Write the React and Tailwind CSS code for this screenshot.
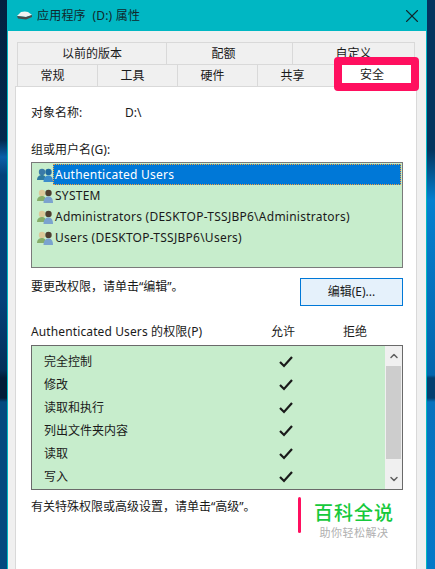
import { X, ChevronUp, ChevronDown } from 'lucide-react'

const font = { fontFamily: '"Noto Sans", "Noto Sans CJK SC", sans-serif' }

const topTabs = [
  { label: '以前的版本', cls: 'w-[149px]' },
  { label: '配额', cls: 'w-[126px] pr-[12px]' },
  { label: '自定义', cls: 'w-[123px] border-r' },
]
const bottomTabs = ['常规', '工具', '硬件', '共享']
const users = [
  { name: 'Authenticated Users', selected: true },
  { name: 'SYSTEM' },
  { name: 'Administrators (DESKTOP-TSSJBP6\\Administrators)' },
  { name: 'Users (DESKTOP-TSSJBP6\\Users)' },
]
const perms = ['完全控制', '修改', '读取和执行', '列出文件夹内容', '读取', '写入']

function DriveIcon() {
  return (
    <svg width="15" height="9" viewBox="0 0 15 9">
      <path d="M0 5 L4 1 Q8 0 11 1 L15 4 L9 6 Z" fill="#f2f2f2" />
      <path d="M0 5 L9 6 L15 4 V6 L9 8.5 L1 7.5 Z" fill="#4a4a4a" />
    </svg>
  )
}

function UsersIcon({ blue }) {
  const backHead = blue ? '#3a7aa8' : '#dcc99a'
  const backBody = blue ? '#2f7aa0' : '#86ad6a'
  const frontHead = blue ? '#1f6aa0' : '#4f3f30'
  const frontBody = blue ? '#3a8ccc' : '#7ba3cf'
  return (
    <svg width="16" height="14" viewBox="0 0 16 14">
      <circle cx="5" cy="4" r="3.2" fill={backHead} />
      <path d="M0 12 C0 8 3 7 5 7 C7 7 9 8 9 12 Z" fill={backBody} />
      <circle cx="11.5" cy="4" r="3.2" fill={frontHead} />
      <path d="M6.5 14 C6.5 9 9 7.5 11.5 7.5 C14 7.5 16 9 16 14 Z" fill={frontBody} />
    </svg>
  )
}

function CheckMark() {
  return (
    <svg width="14" height="12" viewBox="0 0 14 12" fill="none" stroke="#1a1a1a" strokeWidth="2.2">
      <path d="M1 6 L5 10 L13 1" />
    </svg>
  )
}

export default function App() {
  return (
    <div style={font} className="flex h-[569px] w-[435px] overflow-hidden bg-[#0078c8] text-xs text-[#1a1a1a]">
      <div className="w-[7px] shrink-0 bg-[linear-gradient(180deg,#02213f_0px,#03294e_140px,#0a5fa8_157px,#03427a_175px,#03417a_300px,#032f58_370px,#021c38_378px,#021c38_398px,#03497f_402px,#03497f_569px)]" />

      <div className="relative flex w-[420px] shrink-0 flex-col border-x border-[#00b7c3] bg-[#f0f0f0]">
        <div className="flex h-[31px] shrink-0 items-center bg-[#00b7c3] pl-[9px] pr-[3px]">
          <DriveIcon />
          <span className="ml-[5px] whitespace-pre text-xs tracking-[0.2px] text-[#10282c]">应用程序  (D:) 属性</span>
          <X className="ml-auto text-[#10282c]" size={22} strokeWidth={1.2} />
        </div>

        <div className="mt-[11px] flex flex-col pl-[9px]">
          <div className="flex h-[22px]">
            {topTabs.map((t) => (
              <div key={t.label} className={`${t.cls} flex items-center justify-center border-l border-t border-[#d9d9d9]`}>
                {t.label}
              </div>
            ))}
          </div>
          <div className="flex h-[22px]">
            {bottomTabs.map((t) => (
              <div key={t} className="flex w-[80px] items-center justify-center border-l border-t border-[#d9d9d9] pr-[10px]">
                {t}
              </div>
            ))}
          </div>
        </div>

        <div className="ml-[7px] mr-[9px] flex flex-1 flex-col border-l border-r border-t border-[#d9d9d9] bg-white pl-[15px] pr-[13px]">
          <div className="mt-[17px] flex h-[18px] items-center">
            <span className="w-[94px]">对象名称:</span>
            <span>D:\</span>
          </div>

          <div className="mt-[19px] flex h-[18px] items-center">组或用户名(G):</div>

          <div className="mt-[3px] h-[106px] border border-[#7a7a7a] bg-[#c7edcc] pl-[5px] pr-[1px] pt-[1px]">
            {users.map((u) => (
              <div key={u.name} className="flex h-[21px] items-center">
                <UsersIcon blue={u.selected} />
                <span
                  className={
                    u.selected
                      ? 'flex h-[21px] flex-1 items-center border border-dotted border-[#f0a040] bg-[#0078d7] pl-[1px] tracking-[0.25px] text-white'
                      : 'flex h-[21px] flex-1 items-center pl-[2px] tracking-[0.25px]'
                  }
                >
                  {u.name}
                </span>
              </div>
            ))}
          </div>

          <div className="mt-[10px] flex items-start justify-between">
            <span className="mt-[1px]">要更改权限，请单击“编辑”。</span>
            <div className="flex h-[28px] w-[103px] items-center justify-center border border-[#0078d7] bg-[#e5f1fb]">
              编辑(E)...
            </div>
          </div>

          <div className="mt-[17px] flex h-[18px] items-center">
            <span className="w-[240px] tracking-[0.12px]">Authenticated Users 的权限(P)</span>
            <span className="w-[24px] whitespace-nowrap">允许</span>
            <span className="ml-[48px] whitespace-nowrap">拒绝</span>
          </div>

          <div className="mt-[4px] flex h-[145px] border border-[#6a6a6a] bg-[#c7edcc]">
            <div className="flex-1 pl-[12px] pt-[4px]">
              {perms.map((p) => (
                <div key={p} className="flex h-[23px] items-center">
                  <span className="w-[235px]">{p}</span>
                  <CheckMark />
                </div>
              ))}
            </div>
            <div className="flex w-[17px] flex-col items-center bg-[#f0f0f0]">
              <ChevronUp size={12} strokeWidth={3} className="my-[4px] text-[#606060]" />
              <div className="h-[93px] w-[15px] bg-[#cdcdcd]" />
              <ChevronDown size={12} strokeWidth={3} className="mb-[4px] mt-auto text-[#606060]" />
            </div>
          </div>

          <div className="mt-[9px]">有关特殊权限或高级设置，请单击“高级”。</div>
        </div>

        <div className="absolute left-[326px] top-[57px] h-[34px] w-[85px] rounded-[4px] border-[8px] border-[#ff0f5f] bg-white">
          <div className="flex h-full items-center justify-center pr-[9px] pt-[1px] text-xs">安全</div>
        </div>

        <div className="absolute left-[290px] top-[497px] flex h-[36px]">
          <div className="h-full w-[3px] rounded-full bg-[#ff0f5f]" />
          <div className="ml-[13px] mt-[3px] flex flex-col items-center">
            <span className="text-[19px] font-medium leading-[26px] tracking-[1px] text-[#16c93c]">百科全说</span>
            <span className="text-[11px] leading-[13px] tracking-[0.5px] text-[#b0b0b0]">助你轻松解决</span>
          </div>
        </div>
      </div>

      <div className="w-[8px] shrink-0 bg-[linear-gradient(180deg,#04345f_0px,#04345f_150px,#0480d0_200px,#0365ad_375px,#033f70_378px,#033f70_398px,#0672be_402px,#0478c8_569px)]" />
    </div>
  )
}
